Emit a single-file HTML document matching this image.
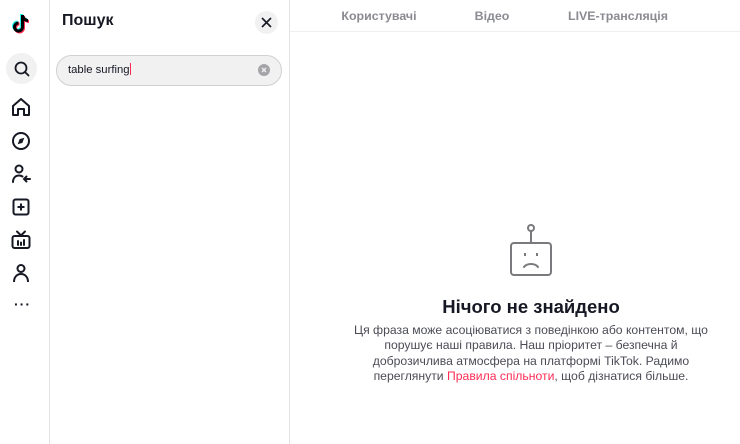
<!DOCTYPE html>
<html><head><meta charset="utf-8"><style>
*{margin:0;padding:0;box-sizing:border-box}
body{width:740px;height:444px;overflow:hidden;background:#fff;font-family:"Liberation Sans",Arial,sans-serif;color:#161823;position:relative}
.sb{position:absolute;left:0;top:0;width:50px;height:444px;border-right:1px solid #e3e3e4}
.ic{position:absolute;left:9px;width:24px;height:24px}
.panel{position:absolute;left:50px;top:0;width:240px;height:444px;border-right:1px solid #e3e3e4}
.main{position:absolute;left:290px;top:0;right:0;height:444px}
.tabs{height:32px;border-bottom:1px solid #efeff0;position:relative}
.tabs span{position:absolute;top:9px;font-size:12.4px;color:#8a8b91;font-weight:bold;transform:translateX(-50%)}
</style></head><body>
<div class="sb">
<svg class="ic" style="top:12px" viewBox="0 0 24 24"><path d="M15 3c.3 2.3 1.8 3.8 4 4v3c-1.5 0-2.8-.4-4-1.2V15a5.5 5.5 0 1 1-5.5-5.5v3a2.5 2.5 0 1 0 2.5 2.5V3z" fill="#25f4ee" transform="translate(-1,-1)"/><path d="M15 3c.3 2.3 1.8 3.8 4 4v3c-1.5 0-2.8-.4-4-1.2V15a5.5 5.5 0 1 1-5.5-5.5v3a2.5 2.5 0 1 0 2.5 2.5V3z" fill="#fe2c55" transform="translate(1,1)"/><path d="M15 3c.3 2.3 1.8 3.8 4 4v3c-1.5 0-2.8-.4-4-1.2V15a5.5 5.5 0 1 1-5.5-5.5v3a2.5 2.5 0 1 0 2.5 2.5V3z" fill="#000"/></svg>
<div style="position:absolute;left:6px;top:53px;width:31px;height:31px;border-radius:50%;background:#f1f1f2"></div>
<svg class="ic" style="top:57px;left:10px" viewBox="0 0 24 24" fill="none" stroke="#161823" stroke-width="1.8"><circle cx="11" cy="11" r="5.5"/><path d="M15 15l3.5 3.5" stroke-linecap="round"/></svg>
<svg class="ic" style="top:95px" viewBox="0 0 24 24" fill="none" stroke="#161823" stroke-width="2" stroke-linejoin="round"><path d="M4 11l8-7 8 7v9h-5v-6h-6v6H4z"/></svg>
<svg class="ic" style="top:129px" viewBox="0 0 24 24" fill="none" stroke="#161823" stroke-width="2"><circle cx="12" cy="12" r="8"/><path d="M14.5 9.5l-1.5 4-3.5 1 1.5-4z" fill="#161823" stroke-width="1"/></svg>
<svg class="ic" style="top:162px" viewBox="0 0 24 24" fill="none" stroke="#161823" stroke-width="2" stroke-linecap="round"><circle cx="10" cy="7" r="3.5"/><path d="M4 20c0-4 2.5-6.5 6-6.5 1.5 0 2.5.3 3.5 1"/><path d="M21 17h-6M17.5 14.5L15 17l2.5 2.5"/></svg>
<svg class="ic" style="top:195px" viewBox="0 0 24 24" fill="none" stroke="#161823" stroke-width="2"><rect x="4.5" y="4.5" width="15" height="15" rx="2"/><path d="M12 8.5v7M8.5 12h7"/></svg>
<svg class="ic" style="top:228px" viewBox="0 0 24 24" fill="none" stroke="#161823" stroke-width="2" stroke-linecap="round"><rect x="3.5" y="8" width="17" height="12" rx="2"/><path d="M8 3.5l4 4 4-4M9 13v4M12 14.5v2.5M15 12v5"/></svg>
<svg class="ic" style="top:261px" viewBox="0 0 24 24" fill="none" stroke="#161823" stroke-width="2"><circle cx="12" cy="7.5" r="3.5"/><path d="M5 21c0-5 3-8 7-8s7 3 7 8"/></svg>
<div style="position:absolute;left:14px;top:296px;font-size:14px;font-weight:bold;letter-spacing:1px">···</div>
</div>
<div class="panel">
<div style="position:absolute;left:12px;top:12px;font-size:16px;font-weight:bold">Пошук</div>
<div style="position:absolute;left:205px;top:11px;width:23px;height:23px;border-radius:50%;background:#f1f1f2"></div>
<svg style="position:absolute;left:209px;top:15px" width="15" height="15" viewBox="0 0 15 15" stroke="#161823" stroke-width="1.6"><path d="M3 3l9 9M12 3l-9 9"/></svg>
<div style="position:absolute;left:6px;top:55px;width:226px;height:31px;border-radius:16px;background:#f1f1f2;border:1px solid #d0d0d2"></div>
<div style="position:absolute;left:18px;top:63px;font-size:11.3px;color:#161823">table surfing<span style="display:inline-block;width:1px;height:12px;background:#fe2c55;vertical-align:-2px"></span></div>
<svg style="position:absolute;left:208px;top:64px" width="12" height="12" viewBox="0 0 12 12"><circle cx="6" cy="6" r="6" fill="#a5a5a9"/><path d="M4 4l4 4M8 4l-4 4" stroke="#f1f1f2" stroke-width="1.3"/></svg>
</div>
<div class="main">
<div class="tabs"><span style="left:89px">Користувачі</span><span style="left:202px">Відео</span><span style="left:328px">LIVE-трансляція</span></div>
<svg style="position:absolute;left:218px;top:222px" width="46" height="56" viewBox="0 0 46 56" fill="none" stroke="#7a7a7e" stroke-width="2"><circle cx="23" cy="6" r="3"/><path d="M23 9v11"/><rect x="3" y="21" width="40" height="32" rx="3"/><path d="M17 31v3M29 31v3"/><path d="M16 45c3-4 11-4 14 0" stroke-linecap="round"/></svg>
<div style="position:absolute;left:141px;width:200px;top:296px;text-align:center;font-size:18.5px;font-weight:bold">Нічого не знайдено</div>
<div style="position:absolute;left:62px;width:358px;top:323px;text-align:center;font-size:12.2px;line-height:15.3px;color:#4b4c55">Ця фраза може асоціюватися з поведінкою або контентом, що порушує наші правила. Наш пріоритет – безпечна й доброзичлива атмосфера на платформі TikTok. Радимо переглянути <span style="color:#fe2c55">Правила спільноти</span>, щоб дізнатися більше.</div>
</div>
</body></html>
